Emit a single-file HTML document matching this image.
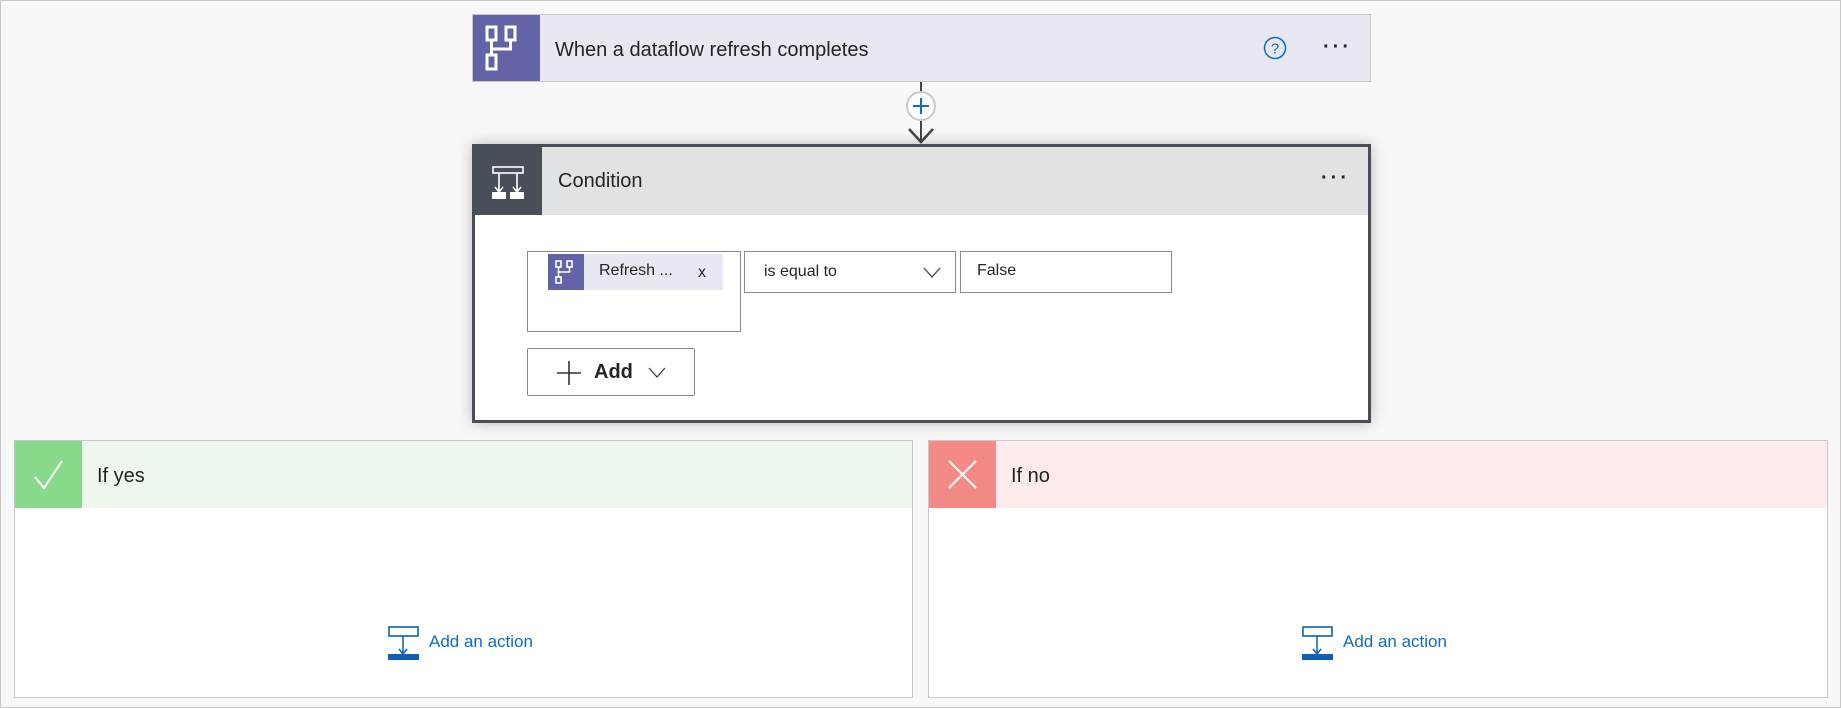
<!DOCTYPE html>
<html><head><style>
*{box-sizing:border-box;margin:0;padding:0}
body{width:1841px;height:708px;background:#f8f8f8;border:1px solid #c8c8c8;position:relative;overflow:hidden;font-family:"Segoe UI","Liberation Sans",sans-serif;color:#252423}
.abs{position:absolute}
.card{position:absolute}
.txt{position:absolute;font-size:20px;white-space:nowrap}
.dots{position:absolute;font-size:20px;letter-spacing:3px;font-weight:bold}
.box{position:absolute;background:#fff;border:1px solid #8a8886}
</style></head><body>
<!-- trigger -->
<div class="card" style="left:471px;top:13px;width:899px;height:68px;background:#e8e8f2;border:1px solid #c8c8c8">
 <div class="abs" style="left:0;top:0;width:67px;height:66px;background:#6264a7">
  <svg width="67" height="66" viewBox="0 0 67 66"><g fill="none" stroke="#fff" stroke-width="3"><rect x="14" y="12" width="9" height="13"/><rect x="33" y="12" width="9" height="13"/><rect x="14" y="40" width="9" height="14"/><path d="M18.5 25v15M37.5 25v9H18.5"/></g></svg>
 </div>
 <div class="txt" style="left:82px;top:24px">When a dataflow refresh completes</div>
 <svg class="abs" style="left:790px;top:21px" width="24" height="24"><circle cx="12" cy="12" r="10.5" fill="none" stroke="#0f6cbd" stroke-width="1.5"/><text x="12" y="17.5" text-anchor="middle" font-size="15" fill="#0f6cbd" font-family="Liberation Sans">?</text></svg>
 <div class="dots" style="left:850px;top:21px">···</div>
</div>
<!-- connector -->
<div class="abs" style="left:919px;top:81px;width:2px;height:12px;background:#444"></div>
<div class="abs" style="left:905px;top:90px;width:30px;height:30px;border-radius:50%;background:#fff;border:2px solid #c8c8c8"></div>
<div class="abs" style="left:912px;top:104px;width:16px;height:1.5px;background:#0f6cbd"></div>
<div class="abs" style="left:919px;top:97px;width:1.5px;height:16px;background:#0f6cbd"></div>
<div class="abs" style="left:919px;top:120px;width:2px;height:20px;background:#444"></div>
<svg class="abs" style="left:906px;top:124px" width="28" height="20"><path d="M2 4 L14 17 L26 4" fill="none" stroke="#444" stroke-width="2.5"/></svg>
<!-- condition -->
<div class="card" style="left:471px;top:143px;width:899px;height:279px;background:#fff;border:3px solid #474e57;box-shadow:0 0 14px rgba(0,0,0,.25)">
 <div class="abs" style="left:0;top:0;width:893px;height:68px;background:#e1e2e4"></div>
 <div class="abs" style="left:0;top:0;width:67px;height:68px;background:#484f58">
  <svg width="67" height="68" viewBox="0 0 67 68"><g stroke="#fff" stroke-width="1.6" fill="none"><rect x="18" y="20" width="30" height="6"/><path d="M24 26v18M20 40l4 5 4-5M42 26v18M38 40l4 5 4-5"/></g><rect x="17" y="45" width="14" height="7" fill="#fff"/><rect x="35" y="45" width="14" height="7" fill="#fff"/></svg>
 </div>
 <div class="txt" style="left:83px;top:23px">Condition</div>
 <div class="dots" style="left:846px;top:20px">···</div>
 <div class="box" style="left:52px;top:104px;width:214px;height:81px">
  <div class="abs" style="left:20px;top:2px;width:175px;height:36px;background:#e8e8f2">
   <div class="abs" style="left:0;top:0;width:36px;height:36px;background:#6264a7"><svg width="36" height="36"><g fill="none" stroke="#fff" stroke-width="1.6"><rect x="8" y="7" width="5" height="6"/><rect x="19" y="7" width="5" height="6"/><rect x="8" y="23" width="5" height="6"/><path d="M10.5 13v10M21.5 13v5H10.5"/></g></svg></div>
   <div class="txt" style="left:51px;top:8px;font-size:16px">Refresh ...</div>
   <div class="txt" style="left:150px;top:10px;font-size:16px">x</div>
  </div>
 </div>
 <div class="box" style="left:269px;top:104px;width:212px;height:42px"><div class="txt" style="left:19px;top:11px;font-size:16px">is equal to</div>
  <svg class="abs" style="left:178px;top:15px" width="18" height="12"><path d="M1 1l8 9 8-9" fill="none" stroke="#444" stroke-width="1.3"/></svg></div>
 <div class="box" style="left:485px;top:104px;width:212px;height:42px"><div class="txt" style="left:16px;top:10px;font-size:16px">False</div></div>
 <div class="box" style="left:52px;top:201px;width:168px;height:48px;border-radius:2px">
  <svg class="abs" style="left:29px;top:12px" width="24" height="24"><path d="M12 0v24M0 12h24" stroke="#333" stroke-width="1.6"/></svg>
  <div class="txt" style="left:66px;top:12px;font-size:20px;font-weight:bold">Add</div>
  <svg class="abs" style="left:120px;top:18px" width="18" height="12"><path d="M1 1l8 9 8-9" fill="none" stroke="#444" stroke-width="1.3"/></svg>
 </div>
</div>
<!-- yes -->
<div class="card" style="left:13px;top:439px;width:899px;height:258px;background:#fff;border:1px solid #c8c8c8">
 <div class="abs" style="left:0;top:0;width:897px;height:67px;background:#edf7ee"></div>
 <div class="abs" style="left:0;top:0;width:67px;height:67px;background:#88d98a"><svg width="67" height="67"><path d="M20 36l9 11 18-27" fill="none" stroke="#fff" stroke-width="2"/></svg></div>
 <div class="txt" style="left:82px;top:24px">If yes</div>
 <svg class="abs" style="left:373px;top:185px" width="32" height="34"><rect x="1" y="1" width="29" height="9" fill="none" stroke="#0f5fb4" stroke-width="1.6"/><path d="M15 10v17M11 23l4 5 4-5" fill="none" stroke="#0f5fb4" stroke-width="1.5"/><rect x="0" y="28" width="31" height="6" fill="#0f5fb4"/></svg>
 <div class="txt" style="left:414px;top:191px;font-size:17px;color:#0f6cbd">Add an action</div>
</div>
<!-- no -->
<div class="card" style="left:927px;top:439px;width:900px;height:258px;background:#fff;border:1px solid #c8c8c8">
 <div class="abs" style="left:0;top:0;width:898px;height:67px;background:#fdebec"></div>
 <div class="abs" style="left:0;top:0;width:67px;height:67px;background:#f48a85"><svg width="67" height="67"><path d="M20 20l27 27M47 20L20 47" stroke="#fff" stroke-width="2"/></svg></div>
 <div class="txt" style="left:82px;top:24px">If no</div>
 <svg class="abs" style="left:373px;top:185px" width="32" height="34"><rect x="1" y="1" width="29" height="9" fill="none" stroke="#0f5fb4" stroke-width="1.6"/><path d="M15 10v17M11 23l4 5 4-5" fill="none" stroke="#0f5fb4" stroke-width="1.5"/><rect x="0" y="28" width="31" height="6" fill="#0f5fb4"/></svg>
 <div class="txt" style="left:414px;top:191px;font-size:17px;color:#0f6cbd">Add an action</div>
</div>
</body></html>
